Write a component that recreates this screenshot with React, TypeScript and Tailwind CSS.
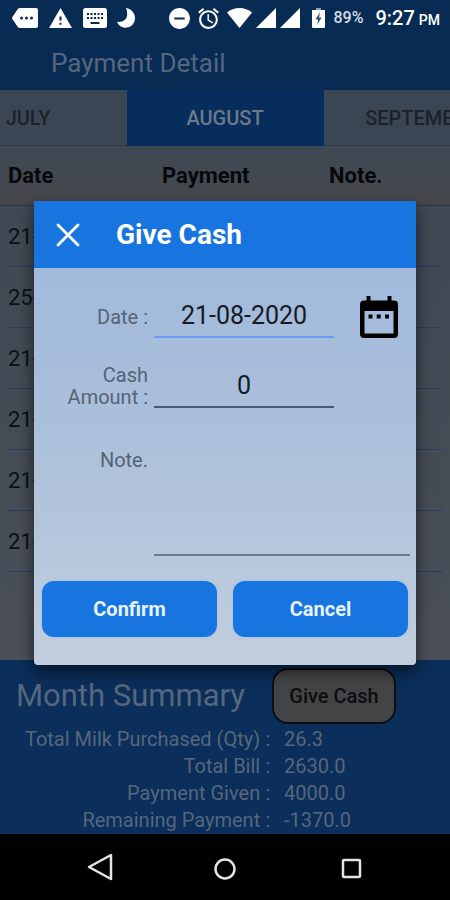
import { MdAlarm, MdDoNotDisturbOn, MdWarning } from "react-icons/md";

const months = ["JULY", "AUGUST", "SEPTEMBER"];

const payments = ["21-", "25-", "21-", "21-", "21-", "21-"];

const summary = [
  { label: "Total Milk Purchased (Qty) :", value: "26.3" },
  { label: "Total Bill :", value: "2630.0" },
  { label: "Payment Given :", value: "4000.0" },
  { label: "Remaining Payment :", value: "-1370.0" },
];

function MessageIcon() {
  return (
    <svg width="26" height="20" viewBox="0 0 26 20" fill="currentColor">
      <path
        fillRule="evenodd"
        d="M8 0h16a2 2 0 0 1 2 2v16a2 2 0 0 1-2 2H8a3 3 0 0 1-2.4-1.200L.4 11a1.600 1.600 0 0 1 0-2L5.600 1.200A3 3 0 0 1 8 0Zm1.500 8.500a1.500 1.500 0 1 0 0 3 1.500 1.500 0 0 0 0-3Zm5 0a1.500 1.500 0 1 0 0 3 1.500 1.500 0 0 0 0-3Zm5 0a1.500 1.500 0 1 0 0 3 1.500 1.500 0 0 0 0-3Z"
      />
    </svg>
  );
}

function KeyboardIcon() {
  return (
    <svg width="24" height="20" viewBox="0 0 24 20">
      <rect width="24" height="20" rx="2.500" fill="currentColor" />
      <path
        stroke="#082b53"
        strokeWidth="2"
        d="M4 6h2m1.500 0h2M11 6h2m1.500 0h2M18 6h2M4 10h2m1.500 0h2m1.500 0h2m1.500 0h2m1.500 0h2M7.500 15h9"
      />
    </svg>
  );
}

function MoonIcon() {
  return (
    <svg width="18" height="20" viewBox="0 0 18 20" fill="currentColor">
      <path d="M9 0c5.500 1 9 5 9 10a9.500 9.500 0 0 1-9.500 9.800C4.800 19.800 1.500 17.500 0 13.800 5.500 14.500 9 12 10 8c.5-3 0-5.500-1-8Z" />
    </svg>
  );
}

function WifiIcon() {
  return (
    <svg width="25" height="20" viewBox="0 0 25 20" fill="currentColor">
      <path d="M12.500 20 0 4.500C3.500 1.500 7.800 0 12.500 0S21.500 1.500 25 4.500Z" />
    </svg>
  );
}

function SignalIcon() {
  return (
    <svg width="20" height="20" viewBox="0 0 20 20" fill="currentColor">
      <path d="M20 0v20H0Z" />
    </svg>
  );
}

function BatteryIcon() {
  return (
    <svg width="13" height="20" viewBox="0 0 13 20">
      <path fill="#8fa0b4" d="M4 0h5v2H4Z" />
      <path fill="currentColor" d="M0 2h13v17a1 1 0 0 1-1 1H1a1 1 0 0 1-1-1Z" />
      <path fill="#33506f" d="M8 4 3.500 11.500h2.700l-1 5.500L9.500 9.500H7Z" />
    </svg>
  );
}

function CloseIcon() {
  return (
    <svg width="24" height="24" viewBox="0 0 24 24" fill="none" stroke="currentColor" strokeWidth="2.800" strokeLinecap="round">
      <path d="m2 2 20 20M22 2 2 22" />
    </svg>
  );
}

function CalendarIcon() {
  return (
    <svg width="38" height="42" viewBox="0 0 38 42" fill="currentColor">
      <path
        fillRule="evenodd"
        d="M6.500 0h4v4.500h17V0h4v4.500H34a4 4 0 0 1 4 4V38a4 4 0 0 1-4 4H4a4 4 0 0 1-4-4V8.500a4 4 0 0 1 4-4h2.500ZM4.500 15v22.500h29V15Z"
      />
      <path d="M8.500 18.500h4v4h-4Zm8.200 0h4v4h-4Zm8.300 0h4v4h-4Z" />
    </svg>
  );
}

function StatusBar() {
  return (
    <header className="flex h-8 items-center justify-between bg-[#082b53] pt-1 pr-2.5 pl-3 text-white">
      <div className="flex items-center gap-2.5">
        <MessageIcon />
        <MdWarning size={25} />
        <KeyboardIcon />
        <MoonIcon />
      </div>
      <div className="flex items-center">
        <MdDoNotDisturbOn size={25} />
        <MdAlarm size={25} className="mr-1.5 ml-1" />
        <div className="flex items-center gap-1">
          <WifiIcon />
          <SignalIcon />
          <SignalIcon />
        </div>
        <div className="mx-3 flex items-center gap-2">
          <BatteryIcon />
          <span className="text-base font-medium text-[#d5dde6]">89%</span>
        </div>
        <span className="text-xl font-medium">9:27</span>
        <span className="pt-1 pl-1 text-sm font-medium">PM</span>
      </div>
    </header>
  );
}

function MonthTabs() {
  return (
    <nav className="flex h-14 justify-center overflow-hidden bg-[#3b4654]">
      {months.map((month) => (
        <button
          key={month}
          type="button"
          className={
            month === "AUGUST"
              ? "w-[197px] shrink-0 bg-[#062d5c] text-xl font-medium text-[#6e7a89]"
              : "w-[197px] shrink-0 border-b border-[#303a46] text-xl font-medium text-[#1b222a]"
          }
        >
          {month}
        </button>
      ))}
    </nav>
  );
}

function PaymentTable() {
  return (
    <table className="block flex-1 bg-linear-to-b from-[#3f4752] to-[#4a4f59] text-left">
      <thead className="block border-b border-[#2c3440] bg-linear-to-b from-[#3e4854] to-[#47484b] px-2">
        <tr className="grid h-[59px] grid-cols-[154px_167px_1fr] items-center text-[22px] text-[#06080b]">
          <th className="font-bold">Date</th>
          <th className="font-bold">Payment</th>
          <th className="font-bold">Note.</th>
        </tr>
      </thead>
      <tbody className="block px-2">
        {payments.map((date, i) => (
          <tr key={i} className="flex h-[61px] items-center border-b border-[#2a3a60] text-[22px] text-[#0c1015]">
            <td>{date}</td>
          </tr>
        ))}
      </tbody>
    </table>
  );
}

function MonthSummary() {
  return (
    <section className="bg-[#0b2e5a] px-4 pt-2 text-[#56677d]">
      <div className="flex items-center justify-between pr-[38px]">
        <h2 className="text-[31px]">Month Summary</h2>
        <button
          type="button"
          className="h-14 w-[124px] rounded-2xl border-2 border-[#0c1015] bg-[#434446] text-xl font-medium text-[#0c0d0f]"
        >
          Give Cash
        </button>
      </div>
      <dl className="grid grid-cols-[254px_1fr] gap-x-3.5 pt-0.5 text-xl leading-[27px]">
        {summary.map((row) => (
          <div key={row.label} className="contents">
            <dt className="text-right">{row.label}</dt>
            <dd>{row.value}</dd>
          </div>
        ))}
      </dl>
    </section>
  );
}

function GiveCashDialog() {
  return (
    <div className="absolute inset-0 flex items-center px-[34px]">
      <form
        role="dialog"
        aria-labelledby="dialog-title"
        className="w-full rounded-b bg-linear-to-b from-[#9db7dc] via-[#abc0da] to-[#c2cedd] shadow-[0_6px_16px_rgba(0,0,0,0.6)]"
      >
        <div className="flex h-[67px] items-center gap-9 bg-[#1874de] px-[22px] text-white">
          <button type="button" aria-label="Close">
            <CloseIcon />
          </button>
          <h1 id="dialog-title" className="text-[28px] font-bold">
            Give Cash
          </h1>
        </div>

        <div className="grid grid-cols-[114px_180px_1fr] gap-x-1.5 pt-[27px] pr-1.5 text-xl text-[#566375]">
          <label htmlFor="date" className="self-center text-right">
            Date :
          </label>
          <input
            id="date"
            defaultValue="21-08-2020"
            className="h-[43px] border-b-2 border-[#6c9af5] text-center text-[25px] text-[#141b24] outline-none"
          />
          <button type="button" aria-label="Pick a date" className="justify-self-end pr-3 text-black">
            <CalendarIcon />
          </button>

          <label htmlFor="amount" className="self-end pt-[26px] text-right leading-[22px]">
            Cash Amount :
          </label>
          <input
            id="amount"
            defaultValue="0"
            className="h-[43px] self-end border-b-2 border-[#4b5a6c] text-center text-[25px] text-[#141b24] outline-none"
          />
          <span />

          <label htmlFor="note" className="pt-[38px] text-right">
            Note.
          </label>
          <textarea
            id="note"
            className="col-span-2 h-[148px] resize-none border-b-2 border-[#6b7b8e] pt-[38px] text-[#141b24] outline-none"
          />
        </div>

        <div className="grid grid-cols-2 gap-4 px-2 pt-[25px] pb-7 text-xl font-bold text-[#e6f3ff]">
          <button type="submit" className="h-14 rounded-xl bg-[#1874de] shadow-[0_0_3px_#8fc4f5]">
            Confirm
          </button>
          <button type="button" className="h-14 rounded-xl bg-[#1874de] shadow-[0_0_3px_#8fc4f5]">
            Cancel
          </button>
        </div>
      </form>
    </div>
  );
}

function NavigationBar() {
  return (
    <footer className="grid h-[66px] grid-cols-[1fr_auto_1fr] items-center bg-black px-[87px] text-[#e4e4e4]">
      <button type="button" aria-label="Back" className="justify-self-start">
        <svg width="27" height="28" viewBox="0 0 27 28" fill="none" stroke="currentColor" strokeWidth="2.500" strokeLinejoin="round">
          <path d="M24 2v24L2 14Z" />
        </svg>
      </button>
      <button type="button" aria-label="Home" className="pt-1">
        <svg width="22" height="22" viewBox="0 0 22 22" fill="none" stroke="currentColor" strokeWidth="2.500">
          <circle cx="11" cy="11" r="9.500" />
        </svg>
      </button>
      <button type="button" aria-label="Recent apps" className="justify-self-end pt-1">
        <svg width="22" height="22" viewBox="0 0 22 22" fill="none" stroke="currentColor" strokeWidth="2.500">
          <rect x="2" y="2" width="17" height="17" rx="1" />
        </svg>
      </button>
    </footer>
  );
}

export default function App() {
  return (
    <div className="flex min-h-screen flex-col overflow-hidden font-[Roboto,sans-serif]">
      <StatusBar />
      <main className="relative flex flex-1 flex-col">
        <div className="flex h-[58px] items-center bg-[#082b53] px-[51px] pt-1 text-[26px] text-[#56677d]">
          Payment Detail
        </div>
        <MonthTabs />
        <PaymentTable />
        <MonthSummary />
        <GiveCashDialog />
      </main>
      <NavigationBar />
    </div>
  );
}
